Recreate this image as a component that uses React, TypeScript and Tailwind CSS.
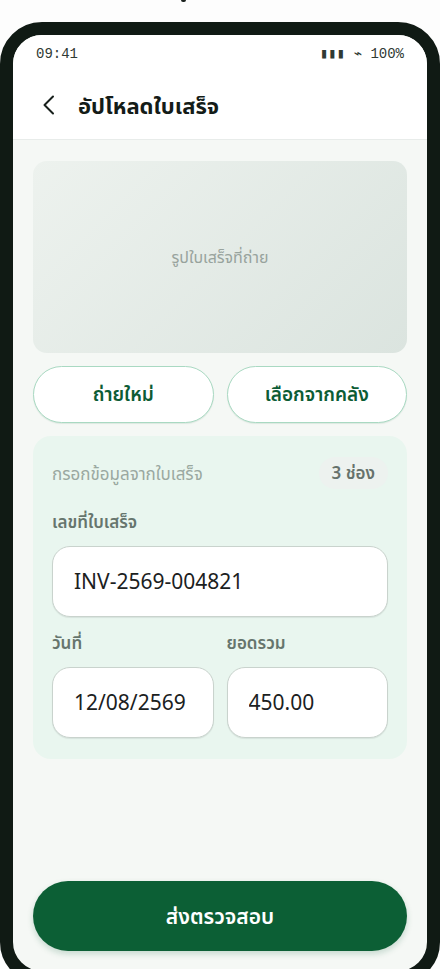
import { useState } from "react";

const inputClass =
  "w-full min-w-0 rounded-[18px] border border-[#c9d3cd] bg-white px-[21px] py-5 text-[21px] leading-[29px] text-[#1b211e] shadow-[0_1px_1px_rgba(15,26,20,0.08)] outline-none";

const outlineButtonClass =
  "rounded-full border border-[#a9d9c2] bg-white py-[13px] text-[19px] leading-[29px] font-semibold text-[#0c5c35] shadow-[0_1px_1px_rgba(12,95,53,0.1)]";

interface FieldProps {
  id: string;
  label: string;
  value: string;
  onChange: (value: string) => void;
}

function Field({ id, label, value, onChange }: FieldProps) {
  return (
    <div className="flex flex-col gap-3 min-w-0">
      <label htmlFor={id} className="text-[17px] leading-[25px] font-semibold text-[#66756d]">
        {label}
      </label>
      <input id={id} type="text" value={value} onChange={(e) => onChange(e.target.value)} className={inputClass} />
    </div>
  );
}

function StatusBar() {
  return (
    <div className="flex items-center justify-between px-[23px] pt-[9px] font-['Liberation_Mono','DejaVu_Sans_Mono',monospace] text-[14px] leading-[20px] text-[#2f3a34]">
      <span>09:41</span>
      <span className="whitespace-pre">▮▮▮ ⌁ 100%</span>
    </div>
  );
}

export default function App() {
  const [form, setForm] = useState({ invoice: "INV-2569-004821", date: "12/08/2569", total: "450.00" });
  const set = (key: string) => (value: string) => setForm({ ...form, [key]: value });

  return (
    <div className="h-screen overflow-hidden bg-[#fdfdfd] font-['Noto_Sans','Noto_Sans_Thai',sans-serif]">
      <div className="flex h-[22px] pl-[181px]">
        <span className="h-[2px] w-[5px] rounded-b-full bg-[#1b211e]" />
      </div>

      {/* Phone */}
      <div className="flex min-h-[calc(100vh-7px)] flex-col overflow-hidden rounded-[42px] border-[13px] border-[#101a14] bg-[#f5f8f5]">
        {/* Header */}
        <header className="border-b border-[#e8ecea] bg-white">
          <StatusBar />
          <div className="flex items-center gap-[17px] px-5 pt-[19px] pb-[12px]">
            <button type="button" aria-label="กลับ" className="flex h-11 w-7 items-center justify-center">
              <svg viewBox="0 0 28 28" className="h-7 w-7" fill="none" stroke="#18201c" strokeWidth="2" strokeLinecap="round" strokeLinejoin="round">
                <path d="M20 5.5 L11.5 14 L20 22.5" />
              </svg>
            </button>
            <h1 className="text-[22px] leading-[32px] font-bold text-[#141c18]">อัปโหลดใบเสร็จ</h1>
          </div>
        </header>

        <main className="flex flex-1 flex-col gap-[13px] px-5 pt-[21px]">
          {/* Receipt photo */}
          <div className="flex h-48 items-center justify-center rounded-[14px] bg-linear-135 from-[#edf2ee] to-[#dbe4df]">
            <span className="text-[16px] leading-6 text-[#98a39d]">รูปใบเสร็จที่ถ่าย</span>
          </div>

          <div className="grid grid-cols-2 gap-[13px]">
            <button type="button" className={outlineButtonClass}>ถ่ายใหม่</button>
            <button type="button" className={outlineButtonClass}>เลือกจากคลัง</button>
          </div>

          {/* Receipt details */}
          <section className="flex flex-col gap-[13px] rounded-[18px] bg-[#e9f6ef] px-[19px] pt-[19px] pb-[21px]">
            <div className="mb-[5px] flex h-9 items-center justify-between">
              <h2 className="text-[17px] leading-[27px] text-[#9aa8a0]">กรอกข้อมูลจากใบเสร็จ</h2>
              <span className="rounded-full bg-[#edf2ef] px-[13px] py-1 text-[17px] leading-6 font-semibold text-[#66726c]">3 ช่อง</span>
            </div>
            <Field id="invoice" label="เลขที่ใบเสร็จ" value={form.invoice} onChange={set("invoice")} />
            <div className="grid grid-cols-2 gap-[13px]">
              <Field id="date" label="วันที่" value={form.date} onChange={set("date")} />
              <Field id="total" label="ยอดรวม" value={form.total} onChange={set("total")} />
            </div>
          </section>
        </main>

        <footer className="px-5 pb-5">
          <button type="button" className="w-full rounded-full bg-[#0c5f35] py-5 text-[21px] leading-[30px] font-semibold text-white shadow-[0_3px_6px_rgba(12,95,53,0.2)]">
            ส่งตรวจสอบ
          </button>
        </footer>
      </div>
    </div>
  );
}
